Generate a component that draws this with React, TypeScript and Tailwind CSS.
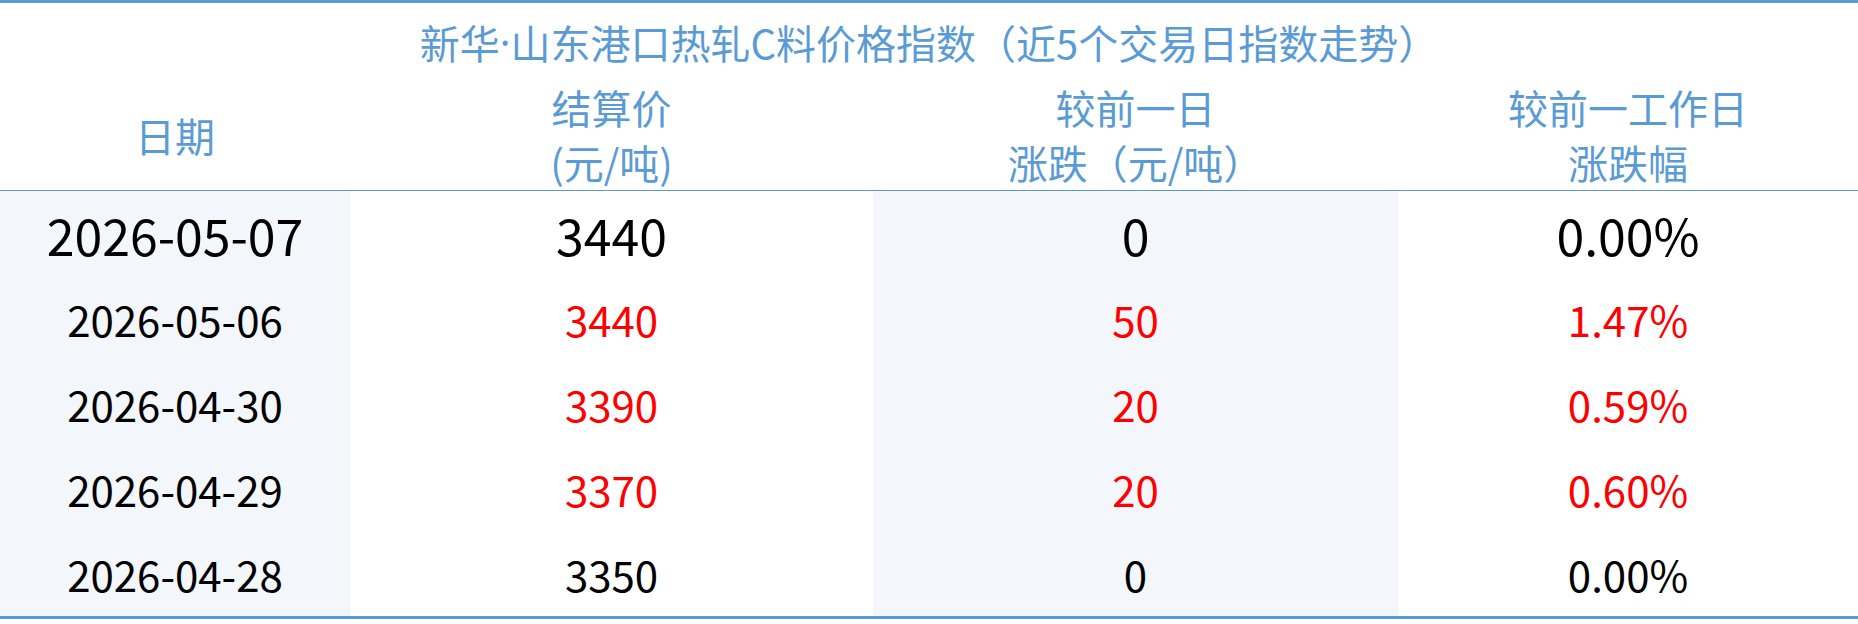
const rows = [
  { date: "2026-05-07", price: "3440", diff: "0", pct: "0.00%", tone: "lead" },
  { date: "2026-05-06", price: "3440", diff: "50", pct: "1.47%", tone: "up" },
  { date: "2026-04-30", price: "3390", diff: "20", pct: "0.59%", tone: "up" },
  { date: "2026-04-29", price: "3370", diff: "20", pct: "0.60%", tone: "up" },
  { date: "2026-04-28", price: "3350", diff: "0", pct: "0.00%", tone: "flat" },
]

const cols = "grid grid-cols-[350px_523px_525px_1fr]"

export default function App() {
  return (
    <div
      className="w-full bg-white border-t-[3px] border-b-[3px] border-[#5b9bd5]"
      style={{ fontFamily: '"Noto Sans CJK SC", "Noto Sans", sans-serif' }}
    >
      <div className="flex h-[77px] items-center justify-center text-[40px] leading-none text-[#5b9bd5]">
        新华<span className="font-['Noto_Sans',sans-serif]">·</span>山东港口热轧C料价格指数（近5个交易日指数走势）
      </div>

      <div className={`${cols} h-[111px] border-b border-[#5b9bd5] text-[40px] leading-[55px] text-[#5b9bd5]`}>
        <div className="flex items-center justify-center">日期</div>
        <div className="flex flex-col items-center justify-center">
          <span>结算价</span>
          <span>(元/吨)</span>
        </div>
        <div className="flex flex-col items-center justify-center">
          <span>较前一日</span>
          <span>涨跌（元/吨）</span>
        </div>
        <div className="flex flex-col items-center justify-center">
          <span>较前一工作日</span>
          <span>涨跌幅</span>
        </div>
      </div>

      {rows.map((r) => {
        const color = r.tone === "up" ? "text-[#ff0000]" : "text-black"
        const size = r.tone === "lead" ? "text-[50px]" : "text-[42px]"
        return (
          <div key={r.date} className={`${cols} h-[85px] ${size} leading-none`}>
            <div className="flex items-center justify-center bg-[#f3f6fb] text-black">{r.date}</div>
            <div className={`flex items-center justify-center ${color}`}>{r.price}</div>
            <div className={`flex items-center justify-center bg-[#f3f6fb] ${color}`}>{r.diff}</div>
            <div className={`flex items-center justify-center ${color}`}>{r.pct}</div>
          </div>
        )
      })}
    </div>
  )
}
